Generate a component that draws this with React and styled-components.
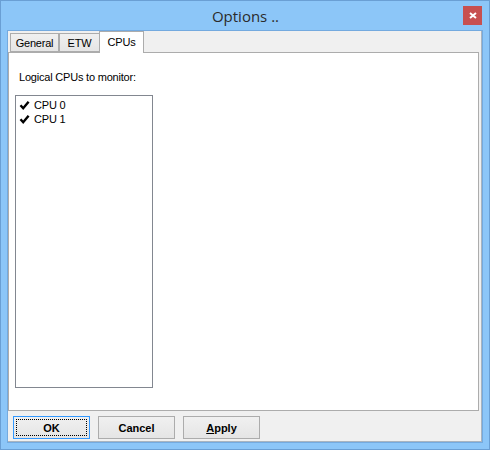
import React from 'react'
import styled, { createGlobalStyle } from 'styled-components'

const GlobalStyle = createGlobalStyle`
  html, body {
    margin: 0;
    padding: 0;
    background: #8cc6f8;
  }
  * {
    box-sizing: border-box;
  }
`

const cpus = ['CPU 0', 'CPU 1']

const tabs = [
  { id: 'general', label: 'General', width: 49 },
  { id: 'etw', label: 'ETW', width: 41 },
  { id: 'cpus', label: 'CPUs', width: 45 }
]

const CheckMark = () => (
  <svg width='11' height='11' viewBox='0 0 11 11'>
    <path d='M1.5 5.2 L4.2 8.2 L9.6 1.8' fill='none' stroke='#000' strokeWidth='2.4' />
  </svg>
)

const CloseGlyph = () => (
  <svg width='8' height='7' viewBox='0 0 8 7'>
    <path d='M1 1 L7 6 M7 1 L1 6' fill='none' stroke='#fff' strokeWidth='2' />
  </svg>
)

export default function App () {
  return (
    <>
      <GlobalStyle />
      <Window>
        <TitleBar>
          <span />
          <Title>Options ..</Title>
          <CloseButton><CloseGlyph /></CloseButton>
        </TitleBar>
        <Client>
          <TabStrip>
            {
              tabs.map((tab) => (
                <Tab key={tab.id} w={tab.width} active={tab.id === 'cpus'}>
                  { tab.label }
                </Tab>
              ))
            }
          </TabStrip>
          <Panel>
            <Label>Logical CPUs to monitor:</Label>
            <ListBox>
              {
                cpus.map((cpu) => (
                  <ListRow key={cpu}>
                    <CheckMark />
                    <span>{ cpu }</span>
                  </ListRow>
                ))
              }
            </ListBox>
          </Panel>
          <ButtonRow>
            <Button isDefault>OK</Button>
            <Button>Cancel</Button>
            <Button><u>A</u>pply</Button>
          </ButtonRow>
        </Client>
      </Window>
    </>
  )
}

const Window = styled.div`
  width: 490px;
  height: 450px;
  background: #8cc6f8;
  border: 1px solid #6a9fd4;
  display: flex;
  flex-direction: column;
  font-family: "Liberation Sans", Arial, sans-serif;
  font-size: 11px;
  letter-spacing: -0.2px;
  color: #000;
`
const TitleBar = styled.div`
  height: 30px;
  flex-shrink: 0;
  display: grid;
  grid-template-columns: 1fr auto 1fr;
  align-items: start;
  padding: 5px 7px 0 8px;
`
const Title = styled.div`
  font-family: "Open Sans", "Noto Sans", sans-serif;
  font-size: 15px;
  letter-spacing: 0;
  line-height: 20px;
  margin-top: 0;
  color: #2b2b2b;
`
const CloseButton = styled.div`
  justify-self: end;
  width: 19px;
  height: 19px;
  background: #c75050;
  display: flex;
  align-items: center;
  justify-content: center;
`
const Client = styled.div`
  flex: 1;
  margin: 0 7px 7px;
  background: #f0f0f0;
  box-shadow: 0 0 0 1px #74aadf;
  border-right: 1px solid #a9b4bf;
  border-bottom: 1px solid #a9b4bf;
  display: flex;
  flex-direction: column;
`
const TabStrip = styled.div`
  height: 21px;
  display: flex;
  align-items: flex-end;
  padding-left: 2px;
`
const Tab = styled.div`
  position: relative;
  width: ${({ w }) => w}px;
  height: ${({ active }) => active ? 22 : 19}px;
  margin-left: ${({ active }) => active ? -1 : 0}px;
  margin-bottom: ${({ active }) => active ? -1 : 0}px;
  z-index: ${({ active }) => active ? 1 : 0};
  display: flex;
  align-items: center;
  justify-content: center;
  padding-bottom: ${({ active }) => active ? 2 : 0}px;
  border: 1px solid #acacac;
  border-bottom: ${({ active }) => active ? 'none' : '1px solid #acacac'};
  background: ${({ active }) => active ? '#fff' : 'linear-gradient(#f0f0f0, #e5e5e5)'};
`
const Panel = styled.div`
  height: 359px;
  margin-right: 2px;
  background: #fff;
  border: 1px solid #acacac;
  padding: 18px 0 0 6px;
`
const Label = styled.div`
  line-height: 13px;
  padding-left: 4px;
`
const ListBox = styled.div`
  width: 138px;
  height: 293px;
  margin-top: 11px;
  border: 1px solid #828790;
  padding: 2px 0 0 3px;
`
const ListRow = styled.div`
  height: 14px;
  display: flex;
  align-items: center;
  gap: 4px;
`
const ButtonRow = styled.div`
  display: flex;
  gap: 8px;
  margin-top: 5px;
  padding-left: 5px;
`
const Button = styled.div`
  width: 77px;
  height: 23px;
  display: flex;
  align-items: center;
  justify-content: center;
  font-weight: bold;
  letter-spacing: 0;
  border: 1px solid ${({ isDefault }) => isDefault ? '#3399ff' : '#acacac'};
  background: linear-gradient(#f0f0f0, #e5e5e5);
  outline: ${({ isDefault }) => isDefault ? '1px dotted #000' : 'none'};
  outline-offset: -4px;

  u {
    text-decoration: underline;
  }
`
